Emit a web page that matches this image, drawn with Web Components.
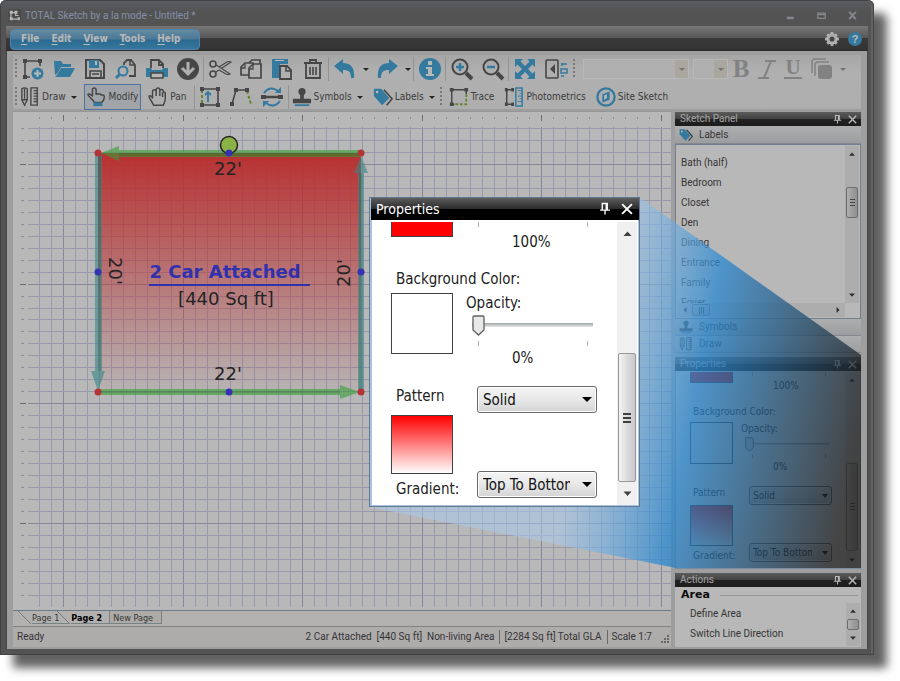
<!DOCTYPE html>
<html lang="en">
<head>
<meta charset="utf-8">
<title>TOTAL Sketch by a la mode</title>
<style>
  html, body { margin: 0; height: 100%; background: #fff; }
  body { box-sizing: border-box; padding: 0 26px 26px 0; display: flex; overflow: hidden;
    --ui: Roboto, "Open Sans", sans-serif;
    --tool: "DejaVu Sans Condensed", "DejaVu Sans", sans-serif;
    --blue: #48a8dc; --ink: #626262;
    font: 10px/14px var(--ui); color: #4c4c4c; }
</style>
</head>
<body>
<sketch-app></sketch-app>

<script>
const SHARED = `
  *, *::before, *::after { box-sizing: border-box; }
  button { font: inherit; color: inherit; background: none; border: 0; padding: 0; margin: 0; display: inline-flex; align-items: center; justify-content: center; cursor: default; white-space: nowrap; }
  svg { display: block; }
`;

class Base extends HTMLElement {
  constructor() {
    super();
    this.attachShadow({ mode: 'open' });
  }
  connectedCallback() {
    this.shadowRoot.innerHTML = `<style>${SHARED}${this.css()}</style>${this.html()}`;
  }
  css() { return ''; }
  html() { return '<slot></slot>'; }
}

const S = 'fill="none" stroke="currentColor"';
const SB = 'fill="none" stroke="var(--blue)"';
const FB = 'fill="var(--blue)"';
const F = 'fill="currentColor"';
const ICONS = {
  new: `<path ${S} stroke-width="1.6" d="M3 3H18V8M3 3V19H8"/><path ${F} d="M1 1h4v4H1zM16 1h4v4h-4zM1 17h4v4H1z"/><circle cx="15.500" cy="15.500" r="6" ${FB}/><path d="M15.500 12v7M12 15.500h7" stroke="#fff" stroke-width="2"/>`,
  open: `<path ${FB} d="M1 3h7l2 3h8v3H8L4 16l-2 1z"/><path ${FB} d="M8 10h14l-5 9H2l2-2z"/>`,
  save: `<path ${S} d="M2 2h14l4 4v14H2z"/><path ${FB} d="M5 2h10v8H5z"/><path fill="#fff" d="M11 3h2v4h-2z"/><path ${S} stroke-width="1.6" d="M6 20v-7h11v7M8 16h7"/>`,
  preview: `<path ${S} stroke-width="1.8" d="M9 7V5l3-3h4l4 5v11h-6"/><path ${S} stroke-width="1.5" d="M15 2v5h5"/><circle cx="8" cy="13" r="4.500" ${SB}/><path ${SB} stroke-width="3" d="M5 16l-4 4"/>`,
  print: `<path ${S} stroke-width="1.8" d="M5 10V2h8l4 4v4M13 2v5h4"/><path ${FB} d="M0 10h5l1 2h10l1-2h5v9H0z"/><path fill="#fff" stroke="currentColor" stroke-width="1.5" d="M5 15h12v5H5z"/>`,
  down: `<circle cx="11" cy="11" r="11" ${F}/><path d="M11 4v12M5 10l6 6 6-6" fill="none" stroke="#f4f4f4" stroke-width="3"/>`,
  cut: `<circle cx="4" cy="6" r="3" ${S} stroke-width="1.6"/><circle cx="4" cy="16" r="3" ${S} stroke-width="1.6"/><path ${S} stroke-width="1.1" d="M7 7l5 3 9 6q-2 1-4 0l-7-4-3 2M10 9l8-5q2-1 4 0l-9 6"/>`,
  copy: `<path fill="#f4f4f4" stroke="currentColor" stroke-width="1.7" d="M8 6l4-4h8v13H8z"/><path fill="#f4f4f4" stroke="currentColor" stroke-width="1.7" d="M1 9l4-4h8v12H1z"/><path fill="#f4f4f4" stroke="currentColor" stroke-width="1.7" d="M9 10l4-4h8v14H9z"/><path ${S} stroke-width="1.3" d="M13 6v5H9M5 5v5H1"/>`,
  paste: `<path ${FB} d="M1 1h16v5H9v14H1z"/><path fill="#fff" d="M4 2h9v1H4z"/><path fill="#f4f4f4" stroke="currentColor" stroke-width="1.8" d="M9 8h7l4 4v9H9z"/><path ${S} stroke-width="1.5" d="M15 8v5h5"/>`,
  trash: `<path ${S} stroke-width="1.8" d="M2 5h18M8 5V2h6v3M4 5v15h14V5"/><path ${S} stroke-width="1.6" d="M8 9v8M11 9v8M14 9v8"/>`,
  undo: `<path ${FB} d="M0 8l9-7v4c8 0 12 5 11 15h-3c0-6-2-8-8-8v4z"/>`,
  redo: `<path ${FB} d="M22 8l-9-7v4C5 5 1 10 2 20h3c0-6 2-8 8-8v4z"/>`,
  info: `<circle cx="11" cy="11" r="11" ${FB}/><path fill="#fff" d="M9 3h4v4H9zM7 9h6v7h2v2H7v-2h2v-5H7z"/>`,
  zoomin: `<circle cx="9" cy="9" r="7.500" ${S}/><path ${S} stroke-width="4" d="M15 15l6 6"/><path ${SB} stroke-width="2.5" d="M9 5v8M5 9h8"/>`,
  zoomout: `<circle cx="9" cy="9" r="7.500" ${S}/><path ${S} stroke-width="4" d="M15 15l6 6"/><path ${SB} stroke-width="2.5" d="M5 9h8"/>`,
  fit: `<path ${FB} d="M1 1h8L6.500 3.500 11 8l4.500-4.500L13 1h8v8l-2.500-2.500L14 11l4.500 4.500L21 13v8h-8l2.500-2.500L11 14l-4.500 4.500L9 21H1v-8l2.500 2.500L8 11 3.500 6.500 1 9z"/>`,
  dim: `<rect x="1" y="2" width="12" height="18" rx="1" ${S} stroke-width="1.6"/><path ${F} d="M10 6v10l-5-5z"/><path ${SB} stroke-width="1.5" d="M16 6h6M17 5v3M16 11h6v4h-6zM16 18h3"/>`,
  bold: `<text x="11" y="19" text-anchor="middle" font-family="Liberation Serif, serif" font-weight="700" font-size="25" fill="#b4b4b4">B</text>`,
  italic: `<path fill="none" stroke="#b4b4b4" d="M9 3h11M2 20h11M15 3L8 20"/>`,
  under: `<text x="11" y="16" text-anchor="middle" font-family="Liberation Serif, serif" font-weight="700" font-size="21" fill="#b4b4b4">U</text><path fill="#b4b4b4" d="M2 19h18v2H2z"/>`,
  layers: `<g fill="none" stroke="#b4b4b4" stroke-width="1.5"><path d="M1 15V4q0-3 3-3h11"/><path d="M4 18V7q0-3 3-3h11"/></g><rect x="7" y="7" width="14" height="14" rx="3" fill="#b4b4b4"/>`,
  draw: `<path ${S} stroke-width="1.5" d="M2 2q3-2 6 0v12l-3 6-3-6zM5 2v11M2 14h6"/><path ${S} stroke-width="1.5" d="M12 1h7v19h-7zM15 4h4M15 7h4M15 10h4M15 13h4M15 16h4"/>`,
  modify: `<path ${S} stroke-width="1.6" stroke-linejoin="round" d="M7 15C4 12 1 10 1 8q2-1 5 2V3q0-2 2-2t2 2v5q2-1 3 0 2-1 3 1 3-1 3 2c0 4-1 4-3 6H8z"/><path ${FB} d="M7 17h10v4H7z"/>`,
  pan: `<path ${S} stroke-width="1.6" stroke-linejoin="round" d="M6 20C5 16 1 13 1 10q2-1 4 2V5q0-2 2-2 1 0 2 2V3q0-2 2-2t2 2v1q1-2 3-1 1 1 1 3 2-1 2 1v6c0 4-2 5-2 7zM9 5v5M13 4v6M16 6v5"/>`,
  box: `<path ${S} stroke-width="1.6" d="M4 3h15v16H4"/><path d="M3 4v15" stroke="#8bb83c" stroke-width="2" stroke-dasharray="3 2"/><path ${F} d="M1 1h4v4H1zM17 1h4v4h-4zM1 17h4v4H1zM17 17h4v4h-4z"/><path ${SB} stroke-width="1.8" d="M9 16V7M6 9l3-3 3 3"/>`,
  poly: `<path ${S} stroke-width="1.6" d="M2 18L6 4h11"/><path d="M17 5l4 13" stroke="#8bb83c" stroke-width="2" stroke-dasharray="3 2"/><path ${F} d="M0 16h4v4H0zM4 2h4v4H4zM15 2h4v4h-4z"/>`,
  flip: `<path ${S} stroke-width="2.5" d="M1 11h20"/><path ${F} d="M0 9h5v4H0zM17 9h5v4h-5z"/><path ${SB} d="M3 7q6-8 14-2M19 15q-6 8-14 2"/><path ${FB} d="M20 1v6h-6zM2 21v-6h6z"/>`,
  stamp: `<path ${F} d="M9 9C7 5 15 5 13 9v4h8v5H1v-5h8z"/><circle cx="11" cy="5" r="4" ${F}/><path ${FB} d="M3 19h16v2H3z"/>`,
  tags: `<path ${S} stroke-width="1.8" d="M12 3l9 10-6 7"/><path ${FB} d="M1 2h8l9 10-8 8L1 10z"/><circle cx="4.500" cy="5.500" r="1.500" fill="#fff"/>`,
  trace: `<path ${S} stroke-width="1.6" d="M19 8V3H3v16h3"/><path fill="none" d="M19 8v11H5" stroke="#8bb83c" stroke-width="2" stroke-dasharray="3 2"/><path ${F} d="M1 1h4v4H1zM17 1h4v4h-4zM1 17h4v4H1z"/>`,
  photo: `<path ${S} stroke-width="1.6" d="M10 3H3v16h7"/><path ${F} d="M1 1h3v4H1zM8 1h3v4H8zM1 17h3v4H1zM8 17h3v4H8z"/><path ${SB} stroke-width="1.6" d="M13 1h7v20h-7z"/><path ${SB} stroke-width="1" d="M15 4h5M17 7h3M15 10h5M17 13h3M15 16h5"/>`,
  site: `<circle cx="11" cy="11" r="9.500" ${SB} stroke-width="2.5"/><path ${FB} d="M7 8l8-3v9l-8 3z"/><path fill="#fff" d="M9 9l3-1v4l-3 2z"/>`,
  gear: `<g fill="#f4f4f4"><circle cx="11" cy="11" r="8"/><path d="M9 0h4l1 5H8zM9 22h4l1-5H8zM0 9v4l5 1V8zM22 9v4l-5 1V8zM2 5l3-3 4 3-4 4zM20 5l-3-3-4 3 4 4zM2 17l3 3 4-3-4-4zM20 17l-3 3-4-3 4-4z"/></g><circle cx="11" cy="11" r="4" fill="#606060"/>`,
  help: `<circle cx="11" cy="11" r="11" ${FB}/><text x="11" y="17" text-anchor="middle" font-family="Liberation Sans, sans-serif" font-weight="700" font-size="17" fill="#fff">?</text>`,
  logo: `<rect width="22" height="22" rx="3" fill="#686868"/><path fill="none" stroke="#fff" d="M5 6v11h11M5 6h8M13 6v5h5"/><path fill="#fff" d="M3 3h5v5H3zM11 3h5v5h-5zM3 14h5v5H3zM16 14h4v5h-4z"/>`,
  min: `<path fill="#b8bcc4" d="M2 14h17v6H2z"/>`,
  max: `<path fill="none" stroke="#b8bcc4" stroke-width="3" d="M2 5h18v13H2zM2 9h18"/>`,
  close: `<path fill="none" stroke="#b8bcc4" stroke-width="5" d="M3 2l16 18M19 2L3 20"/>`,
  x: `<path fill="none" stroke="currentColor" stroke-width="3.5" d="M2 2l18 18M20 2L2 20"/>`,
  pin: `<path fill="none" stroke="currentColor" stroke-width="2.5" d="M6 13V1h9v12M2 13h18M11 13v8"/><path ${F} d="M12 1h4v12h-4z"/>`,
  up: `<path ${F} d="M3 16h16l-8-9z"/>`,
  dn: `<path ${F} d="M3 7h16l-8 9z"/>`,
  lt: `<path ${F} d="M15 3v16l-8-8z"/>`,
  rt: `<path ${F} d="M7 3v16l8-8z"/>`
};

customElements.define('sketch-icon', class extends Base {
  css() {
    return `:host { display: block; flex: none; width: var(--size, 22px); height: var(--size, 22px); } svg { width: 100%; height: 100%; overflow: visible; }`;
  }
  html() { return `<svg viewBox="0 0 22 22" stroke-width="2" aria-hidden="true">${ICONS[this.getAttribute('name')]}</svg>`; }
});

customElements.define('tool-button', class extends Base {
  css() {
    return `
      :host { display: flex; flex: none; color: var(--ink); font-family: var(--tool); }
      button { width: 31px; height: 26px; }
      :host([narrow]) button { width: 26px; }
      :host([label]) button { width: auto; padding: 0 2px; gap: 2px; height: 26px; border: 1px solid transparent; --size: 20px; color: var(--ink); }
      :host([label]) span { color: #545454; }
      :host([pressed]) button { border-color: #6f9fe0; background: #e0e4ea; }`;
  }
  html() {
    const label = this.getAttribute('label');
    const tip = label || this.getAttribute('name');
    return `<button type="button" aria-label="${tip}"><sketch-icon name="${this.getAttribute('name')}"></sketch-icon>${label ? `<span>${label}</span>` : ''}</button>`;
  }
});

customElements.define('tool-caret', class extends Base {
  css() {
    return `:host { display: flex; flex: none; } button { width: 11px; height: 26px; }
      i { border: 3px solid transparent; border-top-color: #333; border-bottom: 0; width: 6px; }
      :host([off]) i { border-top-color: #a0a0a0; }`;
  }
  html() { return `<button type="button" aria-label="More"><i></i></button>`; }
});

customElements.define('tool-sep', class extends Base {
  css() { return `:host { flex: none; width: 1px; height: 24px; background: #ccc; }`; }
});

customElements.define('tool-grip', class extends Base {
  css() { return `:host { flex: none; width: 4px; height: 20px; background: repeating-linear-gradient(#a8a8a8 0 2px, transparent 2px 4px) 2px 0 / 2px 100% no-repeat; }`; }
});

customElements.define('tool-combo', class extends Base {
  css() {
    return `:host { display: block; flex: none; position: relative; width: 106px; height: 20px; }
      :host([short]) { width: 35px; }
      select { appearance: none; width: 100%; height: 100%; border: 1px solid #fff; background: linear-gradient(90deg, transparent calc(100% - 13px), #ece8dc 0) #f4f4f4; border-radius: 0; padding: 0; opacity: 1; }
      i { position: absolute; right: 4px; top: 9px; border: 3px solid transparent; border-top-color: #a0a0a0; border-bottom: 0; }`;
  }
  html() { return `<select disabled aria-label="${this.getAttribute('name')}"></select><i></i>`; }
});

customElements.define('title-bar', class extends Base {
  css() {
    return `:host { display: flex; align-items: center; height: 26px; flex: none; padding: 5px 0 0 2px; gap: 4px; color: #b4c6e8; }
      sketch-icon { --size: 13px; } h1 { flex: 1; margin: 0; font: inherit; white-space: nowrap; }
      button { width: 31px; height: 20px; } button sketch-icon { --size: 9px; } `;
  }
  html() {
    return `<sketch-icon name="logo"></sketch-icon><h1><slot></slot></h1>
      <div><button type="button" aria-label="Minimize"><sketch-icon name="min"></sketch-icon></button><button type="button" aria-label="Maximize"><sketch-icon name="max"></sketch-icon></button><button type="button" aria-label="Close"><sketch-icon name="close"></sketch-icon></button></div>`;
  }
});

customElements.define('menu-bar', class extends Base {
  css() {
    return `:host { display: flex; align-items: center; justify-content: space-between; height: 25px; flex: none; padding: 2px 6px 0 4px;
        background: linear-gradient(#a6a6a6, #787878 50%, #505050 52%, #484848); border-bottom: 1px solid #3c3c3c; }
      nav { display: flex; height: 21px; width: 190px; padding: 0 10px; gap: 12px; align-items: center; border-radius: 4px; border: 1px solid #6fb4e8;
        background: linear-gradient(#8cc0e0, #68a8d0 48%, #3c92c8 52%, #4aa6dc); }
      nav button { color: #fff; font: bold 10px/14px var(--tool); }
      u { text-underline-offset: 2px; }
      div { display: flex; gap: 9px; --size: 14px; }`;
  }
  html() {
    return `<nav>${['File', 'Edit', 'View', 'Tools', 'Help'].map(t => `<button type="button"><span><u>${t[0]}</u>${t.slice(1)}</span></button>`).join('')}</nav>
      <div><button type="button" aria-label="Settings"><sketch-icon name="gear"></sketch-icon></button><button type="button" aria-label="Help"><sketch-icon name="help"></sketch-icon></button></div>`;
  }
});

customElements.define('tool-bars', class extends Base {
  css() {
    return `:host { display: block; flex: none; background: linear-gradient(#e6e6e6, #f4f4f4 30%, #f2f2f2); margin-top: 4px; border-bottom: 1px solid #dcdcdc; }
      .row { display: flex; align-items: center; height: 28px; }
      .row + .row { height: 26px; padding-top: 2px; }
      .push { margin-left: 4px; } .wide { margin-left: 8px; }`;
  }
  html() {
    const b = n => `<tool-button name="${n}"></tool-button>`;
    const sep = '<tool-sep></tool-sep>', car = '<tool-caret></tool-caret>';
    return `<div class="row"><tool-grip></tool-grip>${['new', 'open', 'save', 'preview', 'print', 'down'].map(b).join('')}${sep}${['cut', 'copy', 'paste', 'trash'].map(b).join('')}${sep}${b('undo')}${car}${b('redo')}${car}${sep}${b('info')}${sep}${b('zoomin')}${b('zoomout')}${sep}${b('fit')}${b('dim')}<tool-grip></tool-grip>
        <tool-combo name="Font" class="wide"></tool-combo><tool-combo name="Size" short class="push"></tool-combo>
        <tool-button narrow name="bold"></tool-button><tool-button narrow name="italic"></tool-button><tool-button narrow name="under"></tool-button><tool-button name="layers"></tool-button><tool-caret off></tool-caret></div>
      <div class="row"><tool-grip></tool-grip><tool-button name="draw" label="Draw"></tool-button>${car}<tool-button class="push" name="modify" label="Modify" pressed></tool-button><tool-button class="push" name="pan" label="Pan"></tool-button><tool-sep class="push"></tool-sep>${b('box')}${b('poly')}${b('flip')}<tool-sep></tool-sep>
        <tool-button name="stamp" label="Symbols"></tool-button>${car}<tool-button class="push" name="tags" label="Labels"></tool-button>${car}<tool-grip></tool-grip><tool-button class="push" name="trace" label="Trace"></tool-button><tool-button class="push" name="photo" label="Photometrics"></tool-button><tool-button class="push" name="site" label="Site Sketch"></tool-button></div>`;
  }
});

/* Drawing sheet: rulers on the top and left, ruled paper, and the sketched area. */
customElements.define('sketch-canvas', class extends Base {
  css() {
    return `:host { display: grid; grid-template: 15px minmax(0, 1fr) / 15px minmax(0, 1fr); flex: 1; min-height: 0; background: #fff; border-top: 1px solid #d0d0d0; padding-bottom: 3px; }
      svg { width: 100%; height: 100%; overflow: hidden; } .top { grid-column: 2; }
      text { font: 18px "DejaVu Sans", sans-serif; fill: #333; text-anchor: middle; }
      .name { font-weight: 700; fill: #4444f0; }`;
  }
  html() {
    const step = 598 / 50, at = (o, k) => Math.round(o + k * step);
    let v = '', h = '', rt = '', rl = '';
    for (let k = -2; k < 160; k++) {
      const major = k % 10 === 0, x = at(35, k);
      v += `<rect x="${x}" y="0" width="1" height="100%" fill="${major ? '#bcbcd4' : '#d4d4f0'}"/>`;
      rt += `<rect x="${x}" y="${major ? 3 : 5}" width="1" height="${major ? 6 : 2}" fill="${major ? '#989898' : '#c4c4c4'}"/>`;
    }
    for (let k = -3; k < 120; k++) {
      const major = k % 10 === 0, y = at(37, k);
      h += `<rect y="${y}" x="0" height="1" width="100%" fill="${major ? '#bcbcd4' : '#d4d4f0'}"/>`;
      rl += `<rect y="${y}" x="${major ? 7 : 8}" height="1" width="${major ? 6 : 3}" fill="${major ? '#989898' : '#c4c4c4'}"/>`;
    }
    const dot = (x, y, c) => `<circle cx="${x}" cy="${y}" r="3.500" fill="${c}"/>`;
    return `<svg class="top">${rt}</svg><svg>${rl}</svg>
      <svg role="img" aria-label="2 Car Attached"><defs><linearGradient id="g" x2="0" y2="1"><stop stop-color="#ff4444"/><stop offset="1" stop-color="#ff4444" stop-opacity=".03"/></linearGradient></defs>
      ${v}${h}
      <g transform="translate(-28 -127)">
        <rect x="98" y="153" width="263" height="239" fill="url(#g)"/>
        <g fill="#4bda4b" fill-opacity=".6"><path d="M101 153l18-7v4h242v7H119v4z"/><path d="M98 389h242v-4l20 7-20 7v-4H98z"/></g>
        <g fill="#4bbaba" fill-opacity=".6"><path d="M95 153h7v218h3l-7 20-7-20h4z"/><path d="M358 392V173h-4l7-17 7 17h-4v219z"/></g>
        <g fill="#204020" fill-opacity=".15"><path d="M119 153h242v3H119zM98 391h242v2H98zM98 156h3v215h-3zM359 173h3v219h-3z"/></g>
        <circle cx="229" cy="145" r="8.500" fill="#c0f860" stroke="#333" stroke-width="1.5"/>
        ${dot(98, 153, '#f84848')}${dot(361, 153, '#f84848')}${dot(98, 392, '#f84848')}${dot(361, 392, '#f84848')}
        ${dot(229, 153, '#4848f8')}${dot(229, 392, '#4848f8')}${dot(98, 272, '#4848f8')}${dot(361, 272, '#4848f8')}
        <text x="228" y="175">22'</text><text x="228" y="380">22'</text>
        <text transform="translate(109 271) rotate(90)">20'</text><text transform="translate(350 273) rotate(-90)">20'</text>
        <text class="name" x="225" y="278">2 Car Attached</text><rect x="149" y="284" width="161" height="2" fill="#4444f0"/>
        <text x="226" y="305">[440 Sq ft]</text>
      </g></svg>`;
  }
});

customElements.define('page-tabs', class extends Base {
  css() {
    return `:host { display: flex; align-items: flex-start; flex: none; height: 17px; background: #f8f6f4; border-top: 1px solid #98a8b8; padding-left: 5px; border-bottom: 1px solid #b8b8b8; font: 9px/12px var(--tool); }
      button { align-items: flex-start; } button + button { margin-left: -12px; }
      .b { font-weight: 700; color: #000; } svg { width: 14px; height: 13px; }
      span { height: 13px; border-bottom: 1px solid #a8b4b8; padding: 1px 10px 0 0; }
      .b span { padding-right: 7px; border-right: 1px solid #a8b4b8; }
      button.new { margin-left: 0; } .new span { border-right: 1px solid #b0b0a0; padding: 1px 8px 0 3px; background: #f0eee8; }`;
  }
  html() {
    const s = '<svg viewBox="0 0 14 13"><path d="M0 0l13 13" fill="none" stroke="#a0acb8"/></svg>';
    return `<button type="button">${s}<span>Page 1</span></button><button type="button" class="b">${s}<span>Page 2</span></button><button type="button" class="new"><span>New Page</span></button>`;
  }
});

customElements.define('status-bar', class extends Base {
  css() {
    return `:host { display: flex; align-items: center; flex: none; height: 20px; background: #f2eeee; padding: 0 2px 0 4px; white-space: pre; }
      .grow { flex: 1; } .s { border-left: 1px solid #909090; padding-left: 4px; margin-left: 5px; }
      svg { width: 9px; height: 9px; margin: 5px 0 0 8px; }`;
  }
  html() {
    return `<span class="grow">Ready</span><span>2 Car Attached  [440 Sq ft]  Non-living Area</span><span class="s">[2284 Sq ft] Total GLA</span><span class="s">Scale 1:7</span>
      <svg viewBox="0 0 9 9" fill="#909090"><path d="M7 0h2v2H7zM4 3h2v2H4zM7 3h2v2H7zM1 6h2v2H1zM4 6h2v2H4zM7 6h2v2H7z"/></svg>`;
  }
});

customElements.define('panel-header', class extends Base {
  css() {
    return `:host { display: flex; align-items: center; flex: none; height: 14px; padding: 0 4px 0 5px; color: #fff; background: linear-gradient(#808080, #5c5c5c 48%, #303030 52%, #282828); }
      h2 { flex: 1; margin: 0; font: inherit; color: #e0e0e0; } div { display: flex; gap: 6px; --size: 9px; }
      :host([large]) { height: 22px; font: 14px/20px var(--tool); padding: 0 6px 0 5px; background: linear-gradient(#5c5c5c, #2c2c2c 48%, #000 52%); }
      :host([large]) h2 { color: #fff; } :host([large]) div { gap: 10px; --size: 12px; }`;
  }
  html() {
    return `<h2><slot></slot></h2><div><button type="button" aria-label="Pin"><sketch-icon name="pin"></sketch-icon></button><button type="button" aria-label="Close"><sketch-icon name="x"></sketch-icon></button></div>`;
  }
});

/* Scroll bar. "before" and "after" set the share of track on each side of the thumb. */
customElements.define('scroll-track', class extends Base {
  css() {
    const g = n => this.getAttribute(n);
    return `:host { display: flex; flex-direction: column; flex: none; width: 14px; background: #f0f0f0; color: #404040; --size: 8px; }
      :host([large]) { width: 20px; --size: 11px; } :host([row]) { flex-direction: row; width: auto; height: 14px; }
      button { height: 16px; flex: none; } :host([large]) button { height: 22px; } :host([row]) button { height: 14px; width: 15px; }
      .a { flex: ${g('before')} 0 0; } .z { flex: ${g('after')} 0 0; }
      .t { flex: ${g('thumb')} 0 0; min-height: 0; margin: 0 1px; border: 1px solid #989898; border-radius: 2px; background: linear-gradient(90deg, #f4f4f4, #dcdcdc 50%, #c8c8d0); display: grid; place-items: center; }
      :host([row]) .t { margin: 1px 0; background: linear-gradient(#f4f4f4, #d0d0d8); }
      i { width: 5px; height: 7px; background: repeating-linear-gradient(#606060 0 1px, transparent 1px 3px); }
      :host([large]) i { width: 8px; height: 10px; background: repeating-linear-gradient(#404040 0 2px, transparent 2px 4px); } :host([row]) i { background: repeating-linear-gradient(90deg, #606060 0 1px, transparent 1px 2px); } :host([plain]) i { display: none; }`;
  }
  html() {
    const [a, b] = this.hasAttribute('row') ? ['lt', 'rt'] : ['up', 'dn'];
    return `<button type="button" aria-label="Back"><sketch-icon name="${a}"></sketch-icon></button><span class="a"></span><span class="t"><i></i></span><span class="z"></span><button type="button" aria-label="Forward"><sketch-icon name="${b}"></sketch-icon></button>`;
  }
});

customElements.define('property-form', class extends Base {
  css() {
    return `
      :host { display: flex; flex: 1; min-height: 0; overflow: hidden; background: #fff; color: #222; border: 1px solid #a8c4e0; border-top: 0; padding-top: 2px;
        --pad: 19px; --sw: 62px; --gap: 13px; --ind: 11px; --first: 45px; --lab: 24px; --mid: 93px; --box: 61px; --pat: 29px; --last: 83px; --cut: 15px; --line: 20px; --sel: 120px; --selh: 27px; --range: 24px; --shift: 46px; --in: 5px; --gbox: 59px; --th: 21px; --tw: 13px;
        font: 15px/20px var(--tool); }
      :host([compact]) { --pad: 14px; --sw: 43px; --gap: 8px; --ind: 8px; --first: 31px; --lab: 17px; --mid: 64px; --box: 42px; --pat: 19px; --last: 57px; --cut: 11px; --line: 14px; --sel: 83px; --selh: 19px; --range: 16px; --shift: 32px; --in: 3px; --gbox: 41px; --th: 15px; --tw: 9px;
        font: 10px/14px var(--tool); padding-top: 1px; }
      form { flex: 1; min-width: 0; padding-left: var(--pad); margin: 0; overflow: hidden; }
      .r { display: flex; gap: var(--gap); } .left { width: var(--sw); flex: none; white-space: nowrap; }
      .swatch { display: block; width: var(--sw); height: var(--box); border: 1px solid #404040; background: #fff; }
      .red { background: #f00; height: var(--cut); border-top: 0; } .grad { background: linear-gradient(#f00, #fff); height: var(--gbox); }
      .right { flex: 1; min-width: 0; } .ind { padding-left: var(--ind); }
      label, output { display: block; line-height: var(--line); } .left label, .full { padding-left: var(--in); }
      output { padding-left: var(--shift); }
      .ticks { display: flex; justify-content: space-between; width: 132px; height: 5px; padding: 0 10px 0 12px; margin-bottom: 2px; }
      :host([compact]) .ticks { width: 93px; padding: 0 8px 0 11px; height: 4px; margin-bottom: 4px; }
      .ticks i { width: 1px; background: #b0b0b0; }
      .first .ticks { margin-bottom: 5px; } :host([compact]) .first .ticks { margin-bottom: 3px; }
      .ticks.t2 { margin-top: 4px; } :host([compact]) .ticks.t2 { margin-top: 2px; margin-bottom: 2px; }
      input { appearance: none; display: block; width: calc(var(--sel) + 1px); height: var(--range); margin: 0 0 0 6px; background: linear-gradient(#a0a4a4, #e4e8e8) 0 50% / 100% 4px no-repeat; }
      :host([compact]) input { margin-left: 4px; width: 84px; background-size: 100% 2px; }
      input::-webkit-slider-thumb { appearance: none; width: var(--tw); height: var(--th); background: url("data:image/svg+xml,%3Csvg xmlns='http://www.w3.org/2000/svg' viewBox='0 0 13 21' preserveAspectRatio='none'%3E%3Cpath d='M1 2q0-1 1-1h9q1 0 1 1v13l-5.5 5L1 15z' fill='%23e8e8e8' stroke='%23606060' stroke-width='1.300'/%3E%3C/svg%3E") 0 0 / 100% 100% no-repeat; }
      .sel { position: relative; width: var(--sel); height: var(--selh); }
      select { appearance: none; width: 100%; height: 100%; border: 1px solid #686868; border-radius: 3px; background: linear-gradient(#f4f4f4, #e8e8e8 50%, #d4d4d4); font: inherit; color: #111; padding: 0 26px 0 5px; box-shadow: inset 0 0 0 1px #fff; }
      :host([compact]) select { padding: 0 19px 0 3px; }
      .sel i { position: absolute; right: 5px; top: 11px; border: 5px solid transparent; border-top-color: #000; border-bottom: 0; }
      :host([compact]) .sel i { border-width: 4px 3px 0; right: 4px; top: 8px; }
      .first { height: var(--first); } .full { height: var(--lab); margin-bottom: 2px; line-height: var(--lab); } .mid { height: var(--mid); } .pat { height: var(--pat); } .last { height: var(--last); align-items: stretch; }
      .last .right { display: flex; align-items: flex-end; } .last label { padding-top: var(--in); }
      scroll-track { margin-right: 1px; }`;
  }
  html() {
    const c = this.hasAttribute('compact'), sc = c ? '' : 'large', ticks = k => `<div class="ticks ${k}"><i></i><i></i></div>`;
    return `<form>
      <div class="r first"><div class="left"><span class="swatch red"></span></div><div class="right">${ticks('')}<output>100%</output></div></div>
      <label class="full" for="bg">Background Color:</label>
      <div class="r mid"><div class="left"><button type="button" id="bg" class="swatch" aria-label="Background Color"></button></div><div class="right"><label for="op">Opacity:</label><input id="op" type="range" min="0" max="100" value="0">${ticks('t2')}<output for="op">0%</output></div></div>
      <div class="r pat"><div class="left"><label for="pt">Pattern</label></div><div class="right ind"><div class="sel"><select id="pt"><option>Solid</option></select><i></i></div></div></div>
      <div class="r last"><div class="left"><span class="swatch grad"></span><label for="gr">Gradient:</label></div><div class="right ind"><div class="sel"><select id="gr"><option>Top To Bottom</option></select><i></i></div></div></div>
      </form><scroll-track ${sc} before="110" thumb="128" after="1"></scroll-track>`;
  }
});

customElements.define('side-panel', class extends Base {
  css() {
    return `:host { display: flex; flex-direction: column; width: 186px; flex: none; gap: 4px; padding-top: 2px; }
      section { display: flex; flex-direction: column; flex: none; overflow: hidden; }
      .labels { height: 241px; } .props { height: 212px; } .actions { flex: 1 0 60px; background: #fff; }
      .bar { height: 17px; flex: none; justify-content: flex-start; gap: 6px; padding-left: 4px; background: linear-gradient(#f0f2f4, #d8dadc); border-bottom: 1px solid #b8bcc4; --size: 14px; color: #505050; }
      .labels .bar:first-of-type { height: 18px; }
      .box { flex: 1; min-height: 0; border: 1px solid #a0b0c8; background: #fff; display: grid; grid-template: minmax(0, 1fr) 14px / minmax(0, 1fr) 14px; padding: 1px; }
      ul { list-style: none; margin: 0; padding: 0 0 0 4px; overflow: hidden; } ul.labs { display: flex; flex-direction: column; height: 100%; } .labs li { flex: none; height: 20px; line-height: 20px; } .labs li:first-child { margin-top: -13px; }
      h3 { display: flex; align-items: center; gap: 10px; margin: 0 3px 0 6px; font: bold 11px/16px "DejaVu Sans", sans-serif; color: #111; } h3::after { content: ""; flex: 1; height: 1px; background: #d0d0d0; }
      .act { display: flex; flex: 1; min-height: 0; } .act ul { flex: 1; padding: 1px 0 0 15px; } .act li { height: 20px; line-height: 20px; }
      .act scroll-track { margin: 0 1px 1px 0; } .act a { color: inherit; text-decoration: none; }`;
  }
  html() {
    return `<section class="labels"><panel-header>Sketch Panel</panel-header><button type="button" class="bar"><sketch-icon name="tags"></sketch-icon>Labels</button>
        <div class="box"><ul class="labs">${['Bath', 'Bath (half)', 'Bedroom', 'Closet', 'Den', 'Dining', 'Entrance', 'Family', 'Foyer'].map(t => `<li>${t}</li>`).join('')}</ul><scroll-track before="25" thumb="29" after="70"></scroll-track><scroll-track row before="0" thumb="16" after="120"></scroll-track></div>
        <button type="button" class="bar"><sketch-icon name="stamp"></sketch-icon>Symbols</button><button type="button" class="bar"><sketch-icon name="draw"></sketch-icon>Draw</button></section>
      <section class="props"><panel-header>Properties</panel-header><property-form compact></property-form></section>
      <section class="actions"><panel-header>Actions</panel-header><h3>Area</h3><div class="act"><ul><li><a href="#define">Define Area</a></li><li><a href="#switch">Switch Line Direction</a></li></ul><scroll-track plain before="0" thumb="12" after="0"></scroll-track></div></section>`;
  }
});

customElements.define('sketch-app', class extends Base {
  css() {
    return `
      :host { position: relative; display: flex; flex: 1; flex-direction: column; min-width: 0; padding: 0 6px 6px; border-radius: 6px 6px 0 0;
        background: linear-gradient(#7c8088, #747474 12px, #747474); box-shadow: inset 0 0 0 1px #5c5c5c, inset -2px 0 0 1px #888, 13px 13px 10px rgba(0, 0, 0, .62); }
      main { flex: 1; min-height: 0; display: flex; flex-direction: column; background: #dcdcdc; padding: 0 6px 2px; border: 0 solid #606060; border-width: 0 1px; }
      .cols { flex: 1; min-height: 0; display: flex; gap: 4px; }
      .work { flex: 1; min-width: 0; display: flex; flex-direction: column; padding-top: 1px; }
      .dim { position: absolute; inset: 0; border-radius: inherit; background: rgba(0, 0, 0, .28); pointer-events: none; }
      .beam { position: absolute; top: 197px; right: 13px; width: 492px; height: 371px; pointer-events: none; }
      .popup { position: absolute; top: 197px; right: 234px; width: 271px; height: 310px; display: flex; flex-direction: column; border: 1px solid #607890; padding-left: 1px; background: #a8c4e0; }`;
  }
  html() {
    return `<title-bar>TOTAL Sketch by a la mode - Untitled *</title-bar><menu-bar></menu-bar>
      <main><tool-bars></tool-bars><div class="cols"><div class="work"><sketch-canvas></sketch-canvas><page-tabs></page-tabs><status-bar></status-bar></div><side-panel></side-panel></div></main>
      <div class="dim"></div>
      <svg class="beam" viewBox="369 197 492 371" aria-hidden="true"><defs><linearGradient id="b" gradientUnits="userSpaceOnUse" x1="560" y1="520" x2="831" y2="575"><stop stop-color="#a8ccf0" stop-opacity=".52"/><stop offset=".39" stop-color="#2b88d0" stop-opacity=".75"/><stop offset="1" stop-color="#1c1c1c" stop-opacity=".74"/></linearGradient></defs><path fill="url(#b)" d="M639 197L861 355V568H676L369 507z"/></svg>
      <section class="popup" aria-label="Properties"><panel-header large>Properties</panel-header><property-form></property-form></section>`;
  }
});
</script>
</body>
</html>
